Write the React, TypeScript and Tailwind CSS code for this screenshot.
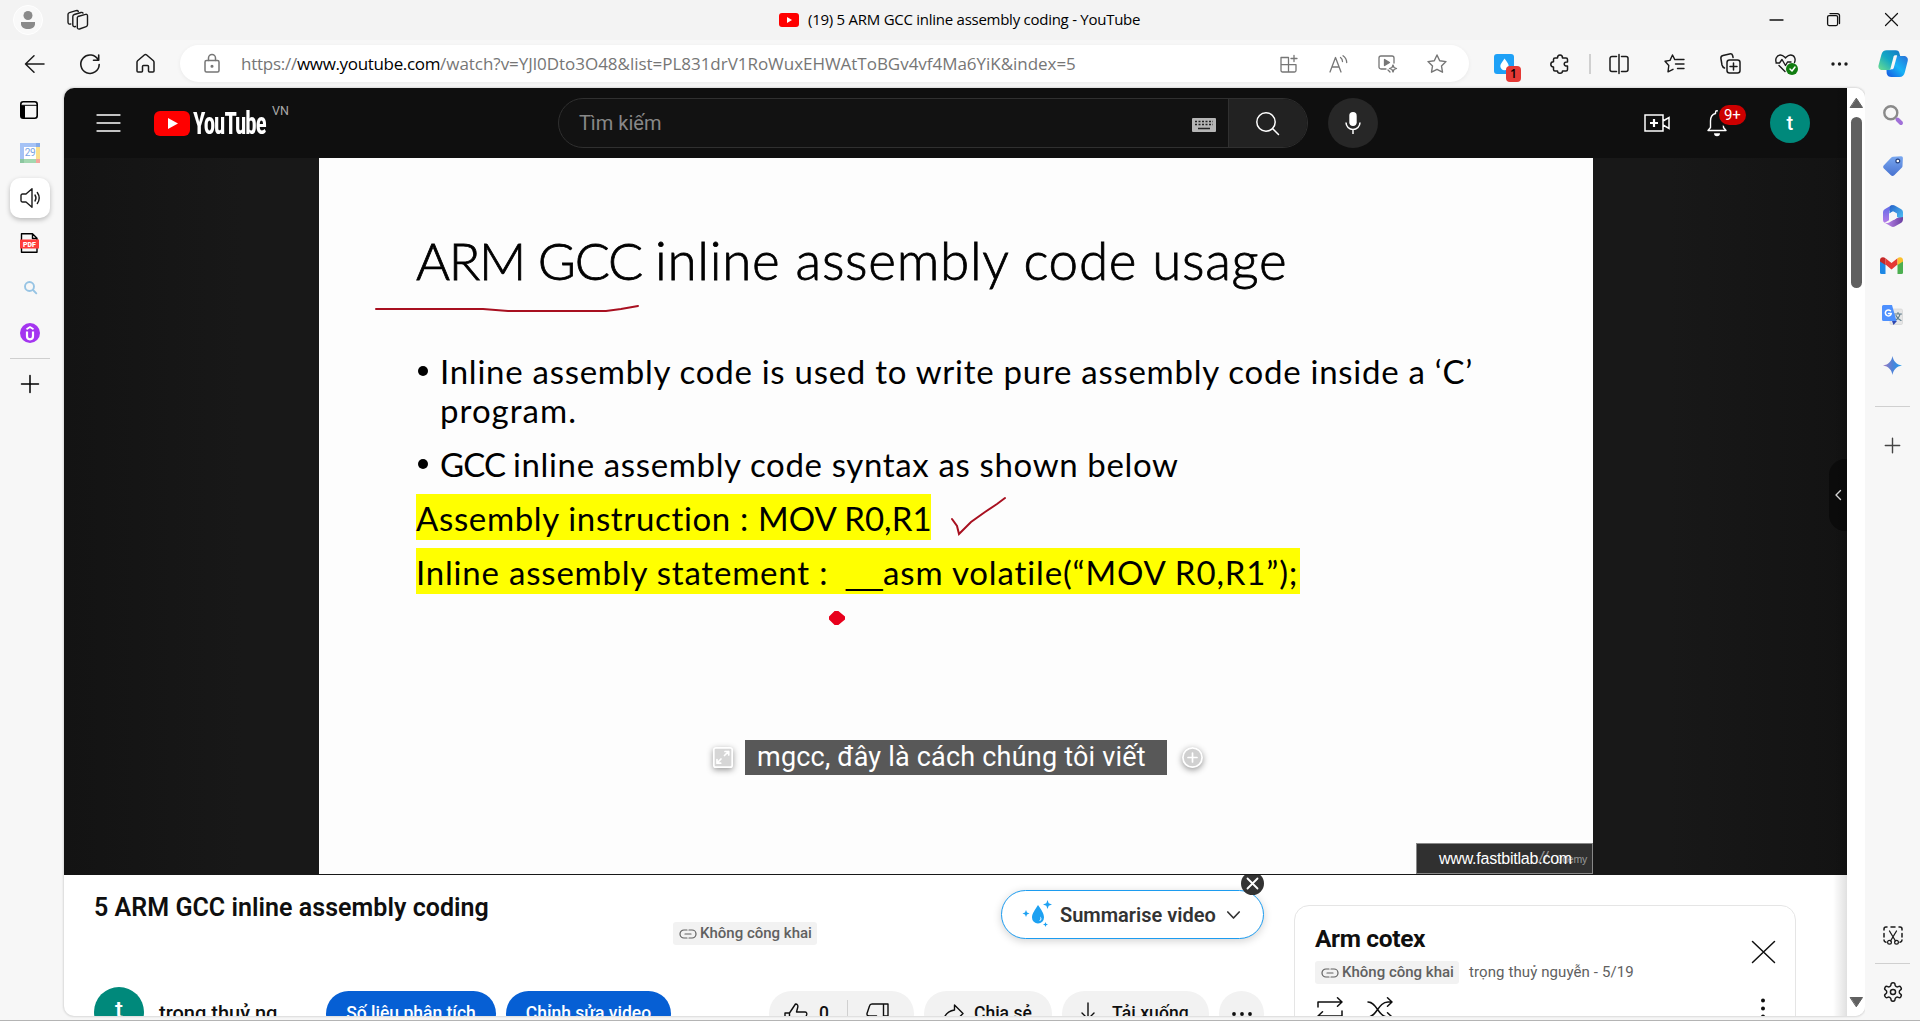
import React from "react";

type IconProps = {
  w: number;
  h: number;
  vb?: string;
  sw?: number;
  className?: string;
  children: React.ReactNode;
};

function Icon({ w, h, vb, sw = 1.5, className = "", children }: IconProps) {
  return (
    <svg
      width={w}
      height={h}
      viewBox={vb ?? `0 0 ${w} ${h}`}
      fill="none"
      stroke="currentColor"
      strokeWidth={sw}
      strokeLinecap="round"
      strokeLinejoin="round"
      className={`block shrink-0 overflow-visible ${className}`}
    >
      {children}
    </svg>
  );
}

const LinkIcon = ({ className = "" }: { className?: string }) => (
  <Icon w={18} h={10} sw={1.2} className={className}>
    <path d="M8 1H5a4 4 0 0 0 0 8h3M10 1h3a4 4 0 0 1 0 8h-3M6 5h6" />
  </Icon>
);

function TitleBar() {
  return (
    <header className="flex h-10 shrink-0 items-center bg-[#f3f3f3] pb-px font-['Open_Sans',sans-serif]">
      <div className="ml-[13px] flex size-[30px] items-center justify-center rounded-full border border-white bg-[#f9f9f9]">
        <Icon w={16} h={18} sw={0}>
          <circle cx="8" cy="4.5" r="4.5" fill="#8a8a8a" />
          <path d="M1 11h14v2c0 3-3 5-7 5s-7-2-7-5z" fill="#8a8a8a" />
        </Icon>
      </div>
      <Icon w={22} h={20} sw={1.4} className="ml-6 text-[#1b1b1b]">
        <path d="M11 6.5l7.5-2.2a1.5 1.5 0 0 1 2 1.4v9a2 2 0 0 1-1.3 1.9L12.500 19a1.700 1.700 0 0 1-2.200-1.600V8.500A2 2 0 0 1 11 6.500z" />
        <path d="M8.500 16.500c-1.500.5-2.700 0-2.700-1.600V6.500c0-1 .5-1.700 1.500-2L14 2.500c1-.3 1.700 0 2 .6" />
        <path d="M3.800 14c-1.500.4-2.800-.2-2.800-1.700V4.500c0-1 .5-1.600 1.400-1.900L9 .7c1.200-.3 2 0 2.300.8" />
      </Icon>
      <div className="ml-[690px] flex w-[364px] items-center gap-[9px]">
        <Icon w={20} h={14} sw={0}>
          <rect width="20" height="14" rx="3" fill="#f00" />
          <path d="M8 4l5 3-5 3z" fill="#fff" />
        </Icon>
        <span className="whitespace-nowrap text-[15px] tracking-[-0.26px] text-black">
          (19) 5 ARM GCC inline assembly coding - YouTube
        </span>
      </div>
      <div className="ml-auto flex items-center pr-[22px] text-[#111]">
        <Icon w={13} h={14} sw={1.3}><path d="M0 7h13" /></Icon>
        <Icon w={13} h={14} sw={1.3} className="ml-[44px]">
          <rect x=".6" y="2.600" width="10" height="10" rx="1.500" />
          <path d="M3 .6h7.500a2 2 0 0 1 2 2V10.500" />
        </Icon>
        <Icon w={13} h={13} sw={1.2} className="ml-[45px]"><path d="M.5.5l12 12M12.500.5l-12 12" /></Icon>
      </div>
    </header>
  );
}

function Toolbar() {
  return (
    <div className="flex h-12 shrink-0 items-center bg-[#f7f7f7] pb-px text-[#1b1b1b]">
      <Icon w={21} h={18} sw={1.5} className="ml-[24px]"><path d="M20 9H1.500M10 .8L1.500 9l8.500 8.200" /></Icon>
      <Icon w={20} h={20} sw={1.6} className="ml-[35px]">
        <path d="M18.200 6A9.200 9.200 0 1 0 19.200 10.500M18.700 1v5.200h-5.200" />
      </Icon>
      <Icon w={19} h={19} sw={1.5} className="ml-[36px]">
        <path d="M1 8.200c0-.6.2-1 .6-1.400L8.300 1c.7-.6 1.700-.6 2.400 0l6.700 5.800c.4.4.6.8.6 1.400V17a1 1 0 0 1-1 1h-3.500a1 1 0 0 1-1-1v-4.500a1 1 0 0 0-1-1h-4a1 1 0 0 0-1 1V17a1 1 0 0 1-1 1H2a1 1 0 0 1-1-1z" />
      </Icon>
      <div className="ml-[25px] flex h-[37px] w-[1289px] items-center rounded-full bg-white text-[#767676] shadow-[0_1px_4px_rgba(0,0,0,0.06)]">
        <Icon w={16} h={19} sw={1.5} className="ml-[24px]">
          <rect x="1" y="6.500" width="14" height="11.500" rx="1.500" />
          <path d="M4.500 6.500V4a3.500 3.500 0 0 1 7 0v2.500" />
          <circle cx="8" cy="12.300" r=".8" fill="currentColor" />
        </Icon>
        <div className="ml-[21px] whitespace-nowrap font-['Open_Sans',sans-serif] text-[17px]">
          <span className="tracking-[-0.25px]">https://</span>
          <span className="tracking-[-0.34px] text-black">www.youtube.com</span>
          <span className="tracking-[-0.03px]">/watch?v=YJl0Dto3O48&amp;list=PL831drV1RoWuxEHWAtToBGv4vf4Ma6YiK&amp;index=5</span>
        </div>
        <div className="ml-auto flex items-center pr-[22px]">
          <Icon w={18} h={18} sw={1.3}>
            <path d="M1 2.500h7.500V17H2.500A1.500 1.500 0 0 1 1 15.500zM1 9.700h15V15.500A1.500 1.500 0 0 1 14.500 17h-6M16 9.700v5M14 .5v6M11 3.500h6" />
          </Icon>
          <Icon w={19} h={18} sw={1.3} className="ml-[31px]">
            <path d="M1 17L6.500 2.500 12 17M3 12h7M11.500 2.500c1.300 1 2 2.400 2 4M14 .8c2.200 1.600 3.700 3.800 3.700 6.700" />
          </Icon>
          <Icon w={19} h={18} sw={1.3} className="ml-[30px]">
            <path d="M8 14H3a2 2 0 0 1-2-2V3a2 2 0 0 1 2-2h11a2 2 0 0 1 2 2v5M12 17l-2-2" />
            <path d="M6.500 4.500v6l5-3z" fill="currentColor" />
            <path d="M15 10l1 2.500 2.500 1-2.500 1-1 2.500-1-2.500-2.500-1 2.500-1z" />
          </Icon>
          <Icon w={20} h={19} sw={1.4} className="ml-[30px]">
            <path d="M10 1l2.700 5.700 6.300.9-4.500 4.400 1 6.200L10 15.300l-5.500 2.900 1-6.200L1 7.600l6.300-.9z" />
          </Icon>
        </div>
      </div>
      <div className="relative ml-[25px] size-5 shrink-0 rounded-[3px] bg-[#1ea1f7]">
        <Icon w={20} h={20} sw={0}><path d="M10.500 4.500c2 3 4.200 5 4.200 7.500a4.200 4.200 0 0 1-8.400 0c0-2.500 2.700-4.500 4.200-7.500z" fill="#fff" /></Icon>
        <span className="absolute left-3 top-3 flex h-4 w-[15px] items-center justify-center rounded-[4px] bg-[#e53935] font-['Open_Sans',sans-serif] text-[12px] font-semibold text-black">1</span>
      </div>
      <Icon w={19} h={20} sw={1.5} className="ml-[36px]">
        <path d="M5 4h2.500c0-1.800.7-3 2.500-3s2.500 1.200 2.500 3H16a1.500 1.500 0 0 1 1.500 1.500V8c-2.200-.2-3.300.7-3.300 2s1.100 2.200 3.300 2v3.500A1.500 1.500 0 0 1 16 17h-3.500c0 1.500-.8 2.300-2.500 2.300S7.500 18.500 7.500 17H5a1.500 1.500 0 0 1-1.500-1.500V13C1.700 13 .8 12 .8 10.300S1.700 7.700 3.500 7.700V5.500A1.500 1.500 0 0 1 5 4z" />
      </Icon>
      <div className="ml-[20px] h-5 w-[2px] bg-[#d0d0d0]" />
      <Icon w={20} h={20} sw={1.5} className="ml-[18px]">
        <path d="M7.500 2.500H3a2 2 0 0 0-2 2v11a2 2 0 0 0 2 2h4.500M12.500 2.500H17a2 2 0 0 1 2 2v11a2 2 0 0 1-2 2h-4.500M10 .5v19" />
      </Icon>
      <Icon w={21} h={20} sw={1.4} className="ml-[35px]">
        <path d="M13 5.500l-2.200.1L8.500 1 6 6.400l-5 .8 3.800 4.300-.8 6.300L9 15.300M13 5.500h7M11.500 10h8.500M13.500 14.500h6.500" />
      </Icon>
      <Icon w={21} h={21} sw={1.5} className="ml-[35px]">
        <rect x="7" y="7" width="13" height="13" rx="2.500" />
        <path d="M13.500 10v7M10 13.500h7M4.500 15C3 14.500 2.400 13.500 2 12L.9 5.500C.7 4 1.400 3 3 2.600l6.500-1.700C11 .5 12.200 1 12.600 2.500l.5 2" />
      </Icon>
      <div className="relative ml-[34px]">
        <Icon w={21} h={19} sw={1.4}>
          <path d="M1.500 9C-.3 5.500 1.500 1 5.500 1 8 1 9 2.500 10.500 4 12 2.500 13 1 15.500 1c4 0 5.500 4 4 7.500M4 11.500l6 6M1 9h3.500L7 5.500l3.500 6 2-3.500H16" />
        </Icon>
        <span className="absolute left-[11px] top-[9px] flex size-[12px] items-center justify-center rounded-full bg-[#107c10]">
          <Icon w={7} h={6} sw={1.5} className="text-white"><path d="M1 3l2 2 3-4" /></Icon>
        </span>
      </div>
      <Icon w={17} h={4} sw={0} className="ml-[35px]">
        <circle cx="2" cy="2" r="1.700" fill="#1b1b1b" /><circle cx="8.500" cy="2" r="1.700" fill="#1b1b1b" /><circle cx="15" cy="2" r="1.700" fill="#1b1b1b" />
      </Icon>
      <Icon w={30} h={27} sw={0} className="ml-[30px]">
        <defs>
          <linearGradient id="cpA" x1="0" y1="1" x2="1" y2="0"><stop offset="0" stopColor="#6fe08c" /><stop offset=".5" stopColor="#12a8c4" /><stop offset="1" stopColor="#1478c8" /></linearGradient>
          <linearGradient id="cpB" x1="0" y1="1" x2="1" y2="0"><stop offset="0" stopColor="#1554e0" /><stop offset=".5" stopColor="#18b4f6" /><stop offset="1" stopColor="#2a6fd6" /></linearGradient>
        </defs>
        <path d="M19 6h6.500c3 0 5 2 4.200 5l-2.800 11c-.8 3.300-2.500 5-5.400 5h-8c-2.500 0-4.300-1-4.800-3.500L8.500 20h2.300c2 0 3-1 3.500-3l2-8c.5-2 1-3 2.700-3z" fill="url(#cpB)" />
        <path d="M11 20H4.500C1.500 20 0 18 .5 15.500L3.300 5C4.200 1.700 6 .3 8.800.3h8.700c2.500 0 3.500 1 4 3.200l.7 2.500h-3.300c-2 0-2.700 1-3.200 3l-2 8c-.5 2-1 3-2.700 3z" fill="url(#cpA)" />
        <path d="M12.300 19.300l3.200-12.500c.4-1 .9-1.500 1.800-1.500h1.900l-3.400 12.500c-.4 1-1 1.500-1.900 1.500z" fill="#f7f7f7" />
      </Icon>
    </div>
  );
}

function LeftRail() {
  return (
    <aside className="flex w-16 shrink-0 flex-col items-center bg-[#f7f7f7] pr-1">
      <Icon w={18} h={18} sw={1.6} className="-ml-[2px] mt-[13px] text-black">
        <rect x=".8" y=".8" width="16.400" height="16.400" rx="2.500" />
        <path d="M1 4.300h16" strokeWidth="1" />
        <path d="M1 4.500h4v12.700H3a2 2 0 0 1-2-2z" fill="currentColor" strokeWidth="0" />
      </Icon>
      <div className="mt-[24px] grid size-5 grid-cols-[4px_12px_4px] grid-rows-[4px_12px_4px]">
        <div className="col-span-2 bg-[#a5c2f5]" /><div className="bg-[#86abe8]" />
        <div className="bg-[#a5c2f5]" />
        <div className="flex items-center justify-center bg-white font-['Roboto',sans-serif] text-[10px] leading-none tracking-[-0.3px] text-[#7aa4e4]">29</div>
        <div className="bg-[#fbe08d]" />
        <div className="bg-[#8cc6a0]" /><div className="bg-[#a3d7b0]" /><div className="bg-[#f6a49c]" />
      </div>
      <div className="mt-[15px] flex size-10 shrink-0 items-center justify-center rounded-[10px] bg-white text-[#1b1b1b] shadow-[0_2px_5px_rgba(0,0,0,0.25)]">
        <Icon w={20} h={20} sw={1.4}>
          <path d="M12 .8v18.400L6 14H2.500A1.500 1.500 0 0 1 1 12.500v-5A1.500 1.500 0 0 1 2.500 6H6zM15 7c1.200 1.800 1.200 4.200 0 6M17.300 4.500c2.300 3.300 2.300 7.700 0 11" />
        </Icon>
      </div>
      <Icon w={19} h={20} sw={1.4} className="-ml-px mt-[15px] text-black">
        <path d="M1.500 6.500V.8h11l4.500 4.500v1.500M12.500 1v4.500H17M1.500 15.500v3.700H17v-3.700" />
        <rect y="6.500" width="19" height="9" fill="#ff3b3b" strokeWidth="0" />
        <text x="9.500" y="13.700" textAnchor="middle" fontSize="7" fontWeight="900" fontFamily="Roboto, sans-serif" fill="#fff" stroke="none">PDF</text>
      </Icon>
      <Icon w={13} h={13} sw={1.900} className="mt-[28px] text-[#97c4e4]"><circle cx="5.500" cy="5.500" r="4.500" /><path d="M9 9l3.300 3.300" /></Icon>
      <Icon w={20} h={20} sw={2.200} className="mt-[29px] text-white">
        <circle cx="10" cy="10" r="10" fill="#a435f0" stroke="none" />
        <path d="M6.500 6.300L10 4l3.500 2.300" strokeWidth="1.700" strokeLinecap="butt" />
        <path d="M7 8.500v4.800a3 3 0 0 0 6 0V8.500" strokeLinecap="butt" />
      </Icon>
      <div className="mt-[15px] h-px w-10 bg-[#cfcfcf]" />
      <Icon w={18} h={18} sw={1.5} className="-ml-px mt-[16px] text-black"><path d="M9 .5v17M.5 9h17" /></Icon>
    </aside>
  );
}

function Masthead() {
  return (
    <div className="flex h-[70px] shrink-0 items-center bg-[#0f0f0f] font-['Roboto',sans-serif] text-white">
      <Icon w={23} h={18} sw={1.3} className="ml-[33px]"><path d="M0 1h23M0 9h23M0 17h23" /></Icon>
      <Icon w={36} h={25} sw={0} className="ml-[34px]">
        <rect width="36" height="25" rx="6" fill="#f00" />
        <path d="M14 7l10 5.500-10 5.500z" fill="#fff" />
      </Icon>
      <div className="ml-[3px] h-[34px] w-[76px] origin-left scale-x-[0.75] whitespace-nowrap font-['Roboto_Condensed','Roboto',sans-serif] text-[30.500px] font-bold leading-[36px] tracking-[-1.300px]">
        YouTube
      </div>
      <span className="mb-[24px] ml-[3px] text-[12.500px] leading-none text-[#aaa]">VN</span>
      <div className="ml-[269px] flex h-[50px] w-[750px] shrink-0 items-center rounded-full border border-[#303030] bg-[#121212]">
        <span className="ml-[20px] whitespace-nowrap text-[20px] text-[#888]">Tìm kiếm</span>
        <Icon w={24} h={14} sw={0} className="ml-auto mt-[3px]">
          <rect width="24" height="14" rx="1" fill="#b5b5b5" />
          <path d="M3 3.500h18M3 6.500h18" stroke="#222" strokeWidth="1.500" strokeDasharray="2 1.500" strokeLinecap="butt" />
          <path d="M6 10.500h12" stroke="#222" strokeWidth="1.500" strokeLinecap="butt" />
        </Icon>
        <div className="ml-3 flex h-full w-[79px] items-center justify-center rounded-r-full border-l border-[#303030] bg-[#222]">
          <Icon w={23} h={23} sw={1.5}><circle cx="10" cy="10" r="9.200" /><path d="M16.500 16.500l6 6" /></Icon>
        </div>
      </div>
      <div className="ml-[20px] flex size-[50px] shrink-0 items-center justify-center rounded-full bg-[#272727]">
        <Icon w={16} h={24} sw={1.5}>
          <rect x="4.300" y="1" width="7.400" height="14" rx="3.700" fill="#fff" stroke="none" />
          <path d="M1 11.500a7 7 0 0 0 14 0M8 18.500V23" strokeLinecap="butt" />
        </Icon>
      </div>
      <Icon w={26} h={18} sw={1.5} className="ml-[266px]">
        <path d="M1 1h18v16H1zM19 7l6-3.500v11L19 11" strokeLinejoin="miter" />
        <path d="M10 5v8M6 9h8" strokeWidth="2.200" strokeLinecap="butt" />
      </Icon>
      <div className="relative ml-[37px]">
        <Icon w={20} h={26} sw={1.4}>
          <path d="M1 20.500h18l-2.500-3V11c0-4-2-6.700-5-7.500V2.300a1.500 1.500 0 0 0-3 0v1.200c-3 .8-5 3.500-5 7.500v6.500z" />
          <path d="M7 23.300h6a3 3 0 0 1-6 0z" fill="#fff" stroke="none" />
        </Icon>
        <span className="absolute -top-[5px] left-[12px] flex h-5 w-[27px] items-center justify-center rounded-full bg-[#cc0000] text-[15px] leading-none shadow-[0_0_0_2px_#0f0f0f]">9+</span>
      </div>
      <div className="ml-[43px] flex size-10 shrink-0 items-center justify-center rounded-full bg-[#00897b] text-[20px] font-medium">t</div>
    </div>
  );
}

function Slide() {
  return (
    <div className="relative flex h-[716px] w-[1274px] flex-col bg-[#fdfdfd] font-['Lato',sans-serif] text-black">
      <h1 className="ml-[97px] mt-[72px] flex h-[60px] whitespace-nowrap text-[52px] font-light leading-[60px] [-webkit-text-stroke:0.800px_black]">
        <span className="w-[239px] tracking-[-1.300px]">ARM GCC</span>
        <span className="text-[53px] tracking-[0.700px]">inline assembly code usage</span>
      </h1>
      <ul className="ml-[99px] mt-[62px] whitespace-nowrap text-[33px] leading-[39px]">
        <li className="flex">
          <span className="mt-[14px] size-[10px] shrink-0 rounded-full bg-black" />
          <span className="ml-[12px] tracking-[0.730px]">
            Inline assembly code is used to write pure assembly code inside a ‘C’<br />
            <span className="tracking-[1.050px]">program.</span>
          </span>
        </li>
        <li className="mt-[15px] flex">
          <span className="mt-[14px] size-[10px] shrink-0 rounded-full bg-black" />
          <span className="ml-[12px] tracking-[0.640px]">
            <span className="tracking-[-0.800px]">GCC </span>inline assembly code syntax as shown below
          </span>
        </li>
      </ul>
      <div className="ml-[97px] mt-[10px] h-[46px] w-[515px] whitespace-nowrap bg-[#ffff00] pt-[2px] text-[33px] leading-[45px] tracking-[0.650px]">
        Assembly instruction : <span className="tracking-[0.050px]">MOV R0,R1</span>
      </div>
      <div className="ml-[97px] mt-[8px] flex h-[46px] w-[884px] whitespace-pre bg-[#ffff00] pt-[2px] text-[33px] leading-[45px]">
        <span className="w-[430px] tracking-[0.800px]">Inline assembly statement :  </span>
        <span className="w-[37px] font-['Liberation_Sans',sans-serif]">__</span>
        <span className="tracking-[0.850px]">asm volatile(“MOV R0,R1”);</span>
      </div>
      <svg className="pointer-events-none absolute inset-0" width="1274" height="716" fill="none" stroke="#a81020" strokeWidth="2" strokeLinecap="round">
        <path d="M57 151h107l25 2h98l15-2 17-3" />
        <path d="M633 361l5 7 2 8 12-12 14-10 12-8 8-6" />
        <path d="M511 459l5-5h3l6 5v2l-6 5h-3l-5-5z" fill="#e8001c" stroke="#e8001c" />
      </svg>
      <div className="absolute left-[394px] top-[582px] flex items-center text-white">
        <Icon w={20} h={21} sw={1.7} className="rounded-[3px] bg-[#d6d6d6] drop-shadow-[0_2px_3px_rgba(0,0,0,0.4)]">
          <rect x=".8" y=".8" width="18.400" height="19.400" rx="2" />
          <path d="M11.500 8.500l4-4M12 4.500h3.700V8M8 12l-4 4M4 12.500V16.200h3.700" />
        </Icon>
        <div className="ml-[12px] h-[35px] w-[422px] whitespace-nowrap bg-[#585858] pl-3 font-['Roboto',sans-serif] text-[27px] leading-[34px] tracking-[0.200px]">
          mgcc, đây là cách chúng tôi viết
        </div>
        <Icon w={21} h={21} sw={1.7} className="ml-[15px] rounded-full bg-[#d0d0d0] drop-shadow-[0_2px_3px_rgba(0,0,0,0.4)]">
          <circle cx="10.500" cy="10.500" r="9.600" /><path d="M10.500 6v9M6 10.500h9" />
        </Icon>
      </div>
      <div className="absolute bottom-0 right-0 flex h-[31px] w-[177px] items-center border border-[#888] bg-[#303030] pl-[22px] font-['Liberation_Sans',sans-serif] text-[16px] tracking-[-0.220px] text-white">
        <span className="whitespace-nowrap">www.fastbitlab.com</span>
        <span className="absolute right-[5px] top-[10px] text-[10.500px] leading-none text-white/50">ûdemy</span>
        <span className="absolute left-[122px] top-[6px] text-[16px] italic leading-none text-white/50">//</span>
      </div>
    </div>
  );
}

function Player() {
  return (
    <div className="relative flex h-[717px] shrink-0 justify-center bg-[linear-gradient(90deg,#131313,#181818_10%,#181818_90%,#131313)] pl-[11px] pr-[10px]">
      <Slide />
      <div className="absolute right-0 top-[301px] flex h-[72px] w-[18px] items-center justify-center rounded-l-[16px] bg-[#0b0b0b] text-[#ddd]">
        <Icon w={6} h={10} sw={1.4}><path d="M5.500.5L1 5l4.500 4.500" /></Icon>
      </div>
    </div>
  );
}

function UnlistedBadge() {
  return (
    <span className="flex h-[23px] w-[144px] shrink-0 items-center rounded-[3px] bg-[#f2f2f2] pl-[6px] text-[15px] font-medium text-[#606060]">
      <LinkIcon className="mr-[3px]" />
      <span className="whitespace-nowrap">Không công khai</span>
    </span>
  );
}

function VideoInfo() {
  return (
    <div className="w-[1200px] shrink-0 pl-[30px] text-[#0f0f0f]">
      <div className="flex h-[112px] items-start">
        <h2 className="mt-[17px] w-[579px] whitespace-nowrap text-[25px] font-semibold leading-8 tracking-[0.040px]">5 ARM GCC inline assembly coding</h2>
        <div className="mt-[47px]"><UnlistedBadge /></div>
        <div className="relative ml-[184px] mt-[15px] flex h-[49px] w-[263px] items-center rounded-full border border-[#1c9cf0] bg-white text-[#333] shadow-[0_2px_8px_rgba(0,0,0,0.18)]">
          <Icon w={30} h={30} sw={0} className="ml-[20px]">
            <path d="M16 5c3.500 5 6 8.500 6 12.500a6 6 0 0 1-12 0c0-4 3-7.500 6-12.500z" fill="#1da1f2" />
            <path d="M18 16.500c1 2 .5 3.500-1 4.500 2.500 0 3.500-2.500 1-4.500z" fill="#fff" />
            <path d="M25.500 0l1.200 3.300L30 4.500l-3.300 1.200L25.500 9l-1.200-3.300L21 4.500l3.300-1.200zM4 10l1 2.500 2.500 1-2.500 1L4 17l-1-2.500-2.500-1 2.500-1zM23.500 22l.7 1.800 1.800.7-1.800.7-.7 1.800-.7-1.800-1.800-.7 1.800-.7z" fill="#1da1f2" />
          </Icon>
          <span className="ml-2 w-[156px] whitespace-nowrap text-[20px] font-semibold">Summarise video</span>
          <Icon w={13} h={8} sw={1.700} className="ml-[11px]"><path d="M.8 1l5.700 6 5.700-6" /></Icon>
          <span className="absolute -right-px -top-[19px] flex size-[23px] items-center justify-center rounded-full bg-[#333] text-white">
            <Icon w={11} h={11} sw={1.800}><path d="M.5.5l10 10M10.500.5l-10 10" /></Icon>
          </span>
        </div>
      </div>
      <div className="flex items-start text-[17.500px] font-medium">
        <div className="flex size-[50px] shrink-0 items-center justify-center rounded-full bg-[#00897b] pb-1 text-[24px] text-white">t</div>
        <span className="ml-[15px] mt-[12px] w-[167px] whitespace-nowrap text-[20px] leading-7">trọng thuỷ ng</span>
        <div className="mt-1 flex h-[45px] w-[170px] items-center justify-center whitespace-nowrap rounded-full bg-[#065fd4] text-white">Số liệu phân tích</div>
        <div className="ml-[10px] mt-1 flex h-[45px] w-[165px] items-center justify-center whitespace-nowrap rounded-full bg-[#065fd4] text-white">Chỉnh sửa video</div>
        <div className="ml-[98px] mt-1 flex h-[45px] w-[145px] items-center rounded-full bg-[#f2f2f2]">
          <Icon w={23} h={22} sw={1.4} className="ml-[15px]">
            <path d="M1 10h4.500v11H1zM5.500 10l6-9c2 0 2.700 1.500 2.200 3.500L12.500 9H21c1.500 0 2 1.200 1.700 2.500L20.500 19c-.3 1.300-1 2-2.500 2H5.500" />
          </Icon>
          <span className="ml-3">0</span>
          <span className="ml-[18px] h-[28px] w-px bg-[#d0d0d0]" />
          <Icon w={23} h={22} sw={1.4} className="ml-[18px]">
            <path d="M22 1h-4.500v12H22zM17.500 13l-6 8c-2 0-2.700-1.500-2.200-3.500l1.200-4.500H3c-1.500 0-2.300-1.200-2-2.500L3.500 3c.3-1.300 1-2 2.500-2h11.500" />
          </Icon>
        </div>
        <div className="ml-[10px] mt-1 flex h-[45px] w-[128px] items-center rounded-full bg-[#f2f2f2]">
          <Icon w={22} h={19} sw={1.4} className="ml-[18px]">
            <path d="M12.500 1l8.500 8.500-8.500 8.500v-5C7.500 13 4 14.500 1 18c1-6 4.500-11 11.500-12z" />
          </Icon>
          <span className="ml-[10px] whitespace-nowrap">Chia sẻ</span>
        </div>
        <div className="ml-[10px] mt-1 flex h-[45px] w-[147px] items-center rounded-full bg-[#f2f2f2]">
          <Icon w={14} h={22} sw={1.4} className="ml-[19px]"><path d="M7 0v16M1 10l6 6 6-6M0 21h14" /></Icon>
          <span className="ml-[17px] whitespace-nowrap tracking-[0.100px]">Tải xuống</span>
        </div>
        <div className="ml-[10px] mt-1 flex size-[45px] items-center justify-center rounded-full bg-[#f2f2f2]">
          <Icon w={20} h={4} sw={0}>
            <circle cx="2" cy="2" r="1.900" fill="#0f0f0f" /><circle cx="10" cy="2" r="1.900" fill="#0f0f0f" /><circle cx="18" cy="2" r="1.900" fill="#0f0f0f" />
          </Icon>
        </div>
      </div>
    </div>
  );
}

function PlaylistPanel() {
  return (
    <div className="ml-[30px] mt-[30px] h-[130px] w-[502px] shrink-0 rounded-t-[15px] border border-[#e5e5e5] pl-5 pr-5 text-[#0f0f0f]">
      <div className="flex items-start">
        <div>
          <h3 className="mt-[18px] whitespace-nowrap text-[24.500px] font-bold leading-[30px] tracking-[-0.350px]">Arm cotex</h3>
          <div className="mt-[7px] flex items-center">
            <UnlistedBadge />
            <span className="ml-[10px] whitespace-nowrap text-[15px] tracking-[0.100px] text-[#606060]">trọng thuỷ nguyễn - 5/19</span>
          </div>
        </div>
        <Icon w={23} h={22} sw={1.500} className="ml-auto mt-[35px]"><path d="M.5.500l22 21M22.500.500l-22 21" /></Icon>
      </div>
      <div className="mt-[13px] flex items-start">
        <Icon w={27} h={27} sw={1.500} className="ml-[2px]">
          <path d="M1 10V5h24M20.500.700L25 5l-4.500 4.300M25 14v5H1M5.500 14.700L1 19l4.500 4.300" />
        </Icon>
        <Icon w={26} h={25} sw={1.500} className="ml-[23px]">
          <path d="M1 5c9 0 10 15 20 15h4M1 20c9 0 10-15 20-15h4M20.500.700L25 5l-4.500 4.300M20.500 15.700L25 20l-4.500 4.300" />
        </Icon>
        <Icon w={4} h={22} sw={0} className="ml-auto mr-[10px] mt-[1px]">
          <circle cx="2" cy="2.500" r="2" fill="#0f0f0f" /><circle cx="2" cy="10.500" r="2" fill="#0f0f0f" /><circle cx="2" cy="18.500" r="2" fill="#0f0f0f" />
        </Icon>
      </div>
    </div>
  );
}

function Scrollbar() {
  return (
    <div className="flex w-[18px] shrink-0 flex-col items-center bg-white">
      <Icon w={13} h={10} sw={0} className="mt-[10px]"><path d="M6.500.500L12.500 9.500H.500z" fill="#606060" stroke="#606060" strokeWidth="1" /></Icon>
      <div className="mt-[9px] h-[171px] w-[11px] rounded-full bg-[#606060]" />
      <Icon w={13} h={10} sw={0} className="mb-[9px] mt-auto"><path d="M6.500 9.500L12.500.500H.500z" fill="#606060" stroke="#606060" strokeWidth="1" /></Icon>
    </div>
  );
}

function RightRail() {
  return (
    <aside className="flex w-[55px] shrink-0 flex-col items-center bg-[#f7f7f7] text-[#1b1b1b]">
      <Icon w={20} h={20} sw={2.400} className="mt-[17px]">
        <circle cx="7.800" cy="7.800" r="6.500" stroke="#8a8a8a" />
        <path d="M14.500 14.500l3.500 3.500" stroke="#a070d8" strokeWidth="4" />
      </Icon>
      <Icon w={20} h={20} sw={0} className="mt-[31px]">
        <defs><linearGradient id="tag" x1="0" y1="0" x2="0" y2="1"><stop offset="0" stopColor="#79a8f0" /><stop offset="1" stopColor="#4872d0" /></linearGradient></defs>
        <path d="M10 .800l8-.600a1.800 1.800 0 0 1 1.900 1.900L19.500 10c0 .7-.3 1.200-.8 1.700l-7.500 7.500c-1 1-2.300 1-3.300 0L.9 12.500c-1-1-1-2.300 0-3.300L8.300 1.600c.5-.5 1-.8 1.700-.8z" fill="url(#tag)" />
        <circle cx="14.800" cy="5" r="1.900" fill="#fff" stroke="#25407c" strokeWidth="1.200" />
      </Icon>
      <Icon w={20} h={22} sw={0} className="mt-[29px]">
        <defs>
          <linearGradient id="mA" x1="0" y1="0" x2="0" y2="1"><stop offset="0" stopColor="#5a6be8" /><stop offset="1" stopColor="#b67be8" /></linearGradient>
          <linearGradient id="mB" x1="0" y1="0" x2="1" y2="1"><stop offset="0" stopColor="#2460c8" /><stop offset="1" stopColor="#52c8f8" /></linearGradient>
          <linearGradient id="mC" x1="0" y1="0" x2="1" y2="0"><stop offset="0" stopColor="#c08af0" /><stop offset="1" stopColor="#6a3fa0" /></linearGradient>
        </defs>
        <path d="M9 0L1.700 4.200A3.400 3.400 0 0 0 0 7.100v7.800a3.400 3.400 0 0 0 1.700 2.900L6 15.300V7.500c0-2 3-4 3-7.500z" fill="url(#mA)" />
        <path d="M7 1l1.700-.700a3.400 3.400 0 0 1 3 .2l6.600 3.700A3.400 3.400 0 0 1 20 7.100v8L14 12V8.500L10 6.300 6.300 8.500z" fill="url(#mB)" />
        <path d="M20 12c0 3 0 4.300-1.700 5.700l-6.600 3.800a3.400 3.400 0 0 1-3.400 0L1.700 17.700c2 .8 4 .3 5.300-.7l7-4z" fill="url(#mC)" />
        <circle cx="10" cy="11" r="3.700" fill="#f7f7f7" />
      </Icon>
      <Icon w={23} h={17} sw={0} className="-ml-[2px] mt-[30px]">
        <path d="M0 3l5.500 4v10H1.500A1.500 1.500 0 0 1 0 15.500z" fill="#1e88e5" />
        <path d="M23 3l-5.500 4v10h4a1.500 1.500 0 0 0 1.500-1.500z" fill="#4caf50" />
        <path d="M5.500 1.300L11.500 6l6-4.700V7.500l-6 5-6-5z" fill="#e53935" />
        <path d="M0 3C0 .5 3-.8 5.500 1.300V8L0 4.500z" fill="#c62828" />
        <path d="M23 3c0-2.500-3-3.800-5.500-1.700V8L23 4.500z" fill="#fbc02d" />
      </Icon>
      <Icon w={21} h={20} sw={0} className="-ml-px mt-[31px]">
        <rect x="8" y="4" width="12.500" height="15.500" rx="1.500" fill="#e6e6e6" stroke="#d0d0d0" strokeWidth=".6" />
        <path d="M12.500 9h7M16 7.500V9M18 9c-.5 3-2.500 5-5 6.500M14 10.500c1 2.300 2.500 4 5 5" stroke="#607d8b" strokeWidth="1.200" />
        <path d="M10 16h5l-3.500 4z" fill="#3048b0" />
        <path d="M1.500 0H10l4.500 16h-13A1.500 1.500 0 0 1 0 14.500v-13A1.500 1.500 0 0 1 1.500 0z" fill="#4d90fe" />
        <path d="M8.500 5.800A3 3 0 1 0 9.300 8.500H6.500" stroke="#fff" strokeWidth="1.500" />
      </Icon>
      <Icon w={19} h={19} sw={0} className="mt-[31px]">
        <defs><linearGradient id="gem" x1="0" y1="0" x2="1" y2="0"><stop offset="0" stopColor="#a079c0" /><stop offset=".5" stopColor="#4f83d8" /><stop offset="1" stopColor="#1b9df0" /></linearGradient></defs>
        <path d="M9.500 0c.8 5 4 8.700 9.500 9.500-5.500.8-8.700 4.500-9.500 9.500C8.700 14 5.500 10.300 0 9.500 5.500 8.700 8.700 5 9.500 0z" fill="url(#gem)" />
      </Icon>
      <div className="mt-[31px] h-px w-[35px] bg-[#d0d0d0]" />
      <Icon w={15} h={15} sw={1.400} className="-ml-px mt-[31px] text-[#444]"><path d="M7.500.300v14.400M.300 7.500h14.400" /></Icon>
      <Icon w={20} h={19} sw={1.500} className="mt-auto">
        <path d="M1 4V3a2 2 0 0 1 2-2h1M8 1h4M16 1h1a2 2 0 0 1 2 2v1M1 7.500v3.500M19 7.500v3.500M1 14c0 1.500.7 2 2 2.200M19 14c0 1.500-.7 2-2 2.200" />
        <path d="M6.500 5l6 10M13.500 5l-6 10" strokeWidth="1.300" />
        <circle cx="6.500" cy="16.300" r="1.900" strokeWidth="1.200" /><circle cx="13.500" cy="16.300" r="1.900" strokeWidth="1.200" />
      </Icon>
      <div className="mt-[18px] h-px w-[35px] bg-[#d0d0d0]" />
      <Icon w={22} h={22} vb="0 0 24 24" sw={1.600} className="mb-[17px] mt-[17px]">
        <path d="M12.220 2h-.440a2 2 0 0 0-2 2v.180a2 2 0 0 1-1 1.730l-.430.250a2 2 0 0 1-2 0l-.150-.080a2 2 0 0 0-2.730.730l-.220.380a2 2 0 0 0 .730 2.730l.150.100a2 2 0 0 1 1 1.720v.510a2 2 0 0 1-1 1.740l-.150.090a2 2 0 0 0-.730 2.730l.220.380a2 2 0 0 0 2.730.730l.150-.080a2 2 0 0 1 2 0l.430.250a2 2 0 0 1 1 1.730V20a2 2 0 0 0 2 2h.440a2 2 0 0 0 2-2v-.180a2 2 0 0 1 1-1.730l.430-.250a2 2 0 0 1 2 0l.150.080a2 2 0 0 0 2.730-.730l.220-.390a2 2 0 0 0-.730-2.730l-.150-.080a2 2 0 0 1-1-1.740v-.500a2 2 0 0 1 1-1.740l.150-.090a2 2 0 0 0 .730-2.730l-.220-.380a2 2 0 0 0-2.730-.730l-.150.080a2 2 0 0 1-2 0l-.430-.250a2 2 0 0 1-1-1.730V4a2 2 0 0 0-2-2z" />
        <circle cx="12" cy="12" r="2.800" />
      </Icon>
    </aside>
  );
}

export default function App() {
  return (
    <div className="flex h-[1021px] w-[1920px] flex-col overflow-hidden bg-[#f7f7f7]">
      <TitleBar />
      <Toolbar />
      <div className="flex h-[933px] border-b border-[#b4b4b4]">
        <LeftRail />
        <div className="flex h-[928px] w-[1801px] shrink-0 overflow-hidden rounded-[10px] bg-white shadow-[0_0_2px_1px_rgba(0,0,0,0.12)]">
          <main className="relative flex w-[1783px] shrink-0 flex-col font-['Roboto',sans-serif]">
            <Masthead />
            <Player />
            <div className="flex h-[141px] overflow-hidden">
              <VideoInfo />
              <PlaylistPanel />
            </div>
            <div className="pointer-events-none absolute inset-y-0 right-0 w-[14px] bg-[linear-gradient(270deg,rgba(0,0,0,0.12),transparent)]" />
          </main>
          <Scrollbar />
        </div>
        <RightRail />
      </div>
    </div>
  );
}
